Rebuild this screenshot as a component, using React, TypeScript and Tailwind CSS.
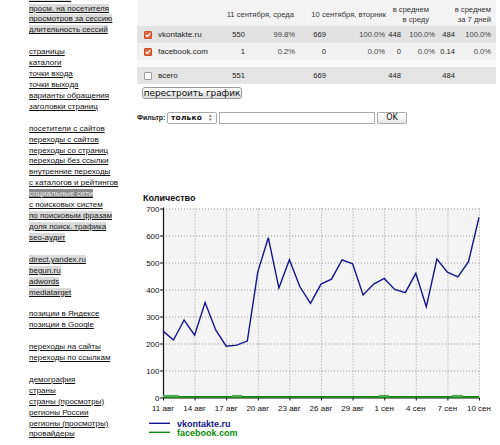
import React from "react";

type NavItem = { t: string; hl?: "light" | "dark" } | null;

const nav: NavItem[] = [
  { t: "посетители", hl: "light" },
  { t: "просм. на посетителя", hl: "light" },
  { t: "просмотров за сессию", hl: "light" },
  { t: "длительность сессий", hl: "light" },
  null,
  { t: "страницы" },
  { t: "каталоги" },
  { t: "точки входа" },
  { t: "точки выхода" },
  { t: "варианты обращения" },
  { t: "заголовки страниц" },
  null,
  { t: "посетители с сайтов" },
  { t: "переходы с сайтов" },
  { t: "переходы со страниц" },
  { t: "переходы без ссылки" },
  { t: "внутренние переходы" },
  { t: "с каталогов и рейтингов" },
  { t: "социальные сети", hl: "dark" },
  { t: "с поисковых систем" },
  { t: "по поисковым фразам", hl: "light" },
  { t: "доля поиск. трафика", hl: "light" },
  { t: "seo-аудит", hl: "light" },
  null,
  { t: "direct.yandex.ru", hl: "light" },
  { t: "begun.ru", hl: "light" },
  { t: "adwords", hl: "light" },
  { t: "mediatarget", hl: "light" },
  null,
  { t: "позиции в Яндексе" },
  { t: "позиции в Google" },
  null,
  { t: "переходы на сайты" },
  { t: "переходы по ссылкам" },
  null,
  { t: "демография" },
  { t: "страны" },
  { t: "страны (просмотры)" },
  { t: "регионы России" },
  { t: "регионы (просмотры)" },
  { t: "провайдеры" },
];

function Nav() {
  return (
    <div className="w-[136px] shrink-0 pl-[29px] mt-[-7.4px] text-[8px] leading-[10.93px]">
      {nav.map((it, i) =>
        it === null ? (
          <div key={i} className="h-[10.93px]" />
        ) : (
          <div key={i} className="h-[10.93px] whitespace-nowrap">
            <span
              className={
                "underline underline-offset-[1px] decoration-[#111] " +
                (it.hl === "dark"
                  ? "bg-[#8a8a8a] text-[#eeeeee]"
                  : it.hl === "light"
                  ? "bg-[#dadada] text-[#222]"
                  : "text-[#111]")
              }
            >
              {it.t}
            </span>
          </div>
        )
      )}
    </div>
  );
}

function Box({ checked }: { checked: boolean }) {
  return checked ? (
    <span className="w-[8px] h-[8px] rounded-[1px] bg-[#e2643d] border border-[#c8502d] flex items-center justify-center">
      <svg width="6" height="6" viewBox="0 0 6 6">
        <path d="M0.8 3 L2.4 4.6 L5.2 1.2" stroke="#fff" strokeWidth="1.3" fill="none" />
      </svg>
    </span>
  ) : (
    <span className="w-[8px] h-[8px] rounded-[1px] bg-white border border-[#9a9a9a]" />
  );
}

type RowProps = {
  bg: string;
  checked: boolean;
  name: string;
  v: string[];
};

function Row({ bg, checked, name, v }: RowProps) {
  return (
    <div className={"flex h-[17px] items-center text-[7.6px] text-[#222] " + bg}>
      <div className="w-[19px] pl-[7px] flex">
        <Box checked={checked} />
      </div>
      <div className="w-[50px] pl-[2px] text-[8px]">{name}</div>
      <div className="w-[39px] text-right">{v[0]}</div>
      <div className="w-[50px] text-right text-[#444]">{v[1]}</div>
      <div className="w-[31px] text-right">{v[2]}</div>
      <div className="w-[59px] text-right text-[#444]">{v[3]}</div>
      <div className="w-[16px] text-right">{v[4]}</div>
      <div className="w-[34px] text-right text-[#444]">{v[5]}</div>
      <div className="w-[20px] text-right">{v[6]}</div>
      <div className="w-[36px] text-right text-[#444]">{v[7]}</div>
    </div>
  );
}

function Table() {
  return (
    <div className="ml-[1px] w-[359px] bg-[#f3f3f3] flex flex-col">
      <div className="flex h-[26px] items-center pt-[4px] text-[7.6px] leading-[10px] text-[#333]">
        <div className="w-[69px]" />
        <div className="w-[89px] text-right pr-[1px]">11 сентября, среда</div>
        <div className="w-[91px] text-right">10 сентября, вторник</div>
        <div className="w-[49px] text-right pr-[6px]">
          в среднем
          <br />в среду
        </div>
        <div className="w-[56px] text-right">
          в среднем
          <br />
          за 7 дней
        </div>
      </div>
      <Row
        bg="bg-[#e2e2e2]"
        checked
        name="vkontakte.ru"
        v={["550", "99.8%", "669", "100.0%", "448", "100.0%", "484", "100.0%"]}
      />
      <Row
        bg="bg-[#f1f1f1]"
        checked
        name="facebook.com"
        v={["1", "0.2%", "0", "0.0%", "0", "0.0%", "0.14", "0.0%"]}
      />
      <div className="h-[7px] bg-[#fafafa]" />
      <Row bg="bg-[#e4e4e4]" checked={false} name="всего" v={["551", "", "669", "", "448", "", "484", ""]} />
    </div>
  );
}

function Filter() {
  return (
    <div className="mt-[13px] flex items-center h-[12px]">
      <span className="ml-[1px] w-[30px] text-[7px] font-bold text-[#222]">Фильтр:</span>
      <div className="w-[50px] h-[12px] border border-[#aaa] rounded-[2px] bg-white flex items-center pl-[3px] text-[#111]">
        <span className="w-[36px] overflow-hidden whitespace-nowrap font-['DejaVu_Sans',sans-serif] text-[7.5px] font-bold tracking-[0.2px]">
          только
        </span>
        <span className="ml-[1px] flex flex-col text-[#666] leading-[4px] text-[4.5px]">
          <span>▲</span>
          <span>▼</span>
        </span>
      </div>
      <div className="ml-[2px] w-[156px] h-[12px] border border-[#aaa] bg-white" />
      <div className="ml-[2px] w-[30px] h-[12px] border border-[#aaa] rounded-[2px] bg-gradient-to-b from-[#ffffff] to-[#e6e6e6] flex items-center justify-center text-[8px] text-[#111] font-['DejaVu_Sans',sans-serif]">
        OK
      </div>
    </div>
  );
}

const vk = [
  246, 213, 287, 231, 352, 250, 190, 194, 209, 465, 592, 405, 510, 410, 349, 420, 438, 510, 495, 380, 420,
  441, 400, 388, 460, 336, 513, 464, 447, 503, 667,
];

const X0 = 163;
const DX = 10.533;
const Y0 = 397.5;
const KY = 0.27;
const xs = (i: number) => X0 + i * DX;
const ys = (v: number) => Y0 - v * KY;

const xLabels = ["11 авг", "14 авг", "17 авг", "20 авг", "23 авг", "26 авг", "29 авг", "1 сен", "4 сен", "7 сен", "10 сен"];

function Chart() {
  const pts = vk.map((v, i) => `${xs(i).toFixed(1)},${ys(v).toFixed(1)}`).join(" ");
  const xEnd = xs(30);
  const yTop = ys(700);
  return (
    <svg
      className="mt-[61px] block"
      width="364"
      height="260"
      viewBox="136 185 364 260"
      fontFamily="'Liberation Sans', Arial, sans-serif"
    >
      <text x="143" y="200.5" fontSize="9" fontWeight="bold" fill="#111">
        Количество
      </text>
      <rect x={X0} y={yTop} width={xEnd - X0} height={Y0 - yTop} fill="#f4f4f4" />
      {[100, 200, 300, 400, 500, 600, 700].map((v) => (
        <line
          key={v}
          x1={X0}
          x2={xEnd}
          y1={ys(v) + 0.5}
          y2={ys(v) + 0.5}
          stroke="#9a9a9a"
          strokeWidth="1"
          strokeDasharray="1 2"
        />
      ))}
      {xLabels.map((_, k) => (
        <line
          key={k}
          x1={xs(k * 3) + 0.5}
          x2={xs(k * 3) + 0.5}
          y1={yTop}
          y2={Y0}
          stroke="#9a9a9a"
          strokeWidth="1"
          strokeDasharray="1 2"
        />
      ))}
      {[0, 100, 200, 300, 400, 500, 600, 700].map((v) => (
        <g key={v}>
          <line x1={X0 - 3} x2={X0} y1={ys(v) + 0.5} y2={ys(v) + 0.5} stroke="#111" strokeWidth="1" />
          <text x="159.5" y={ys(v) + 3} fontSize="8" textAnchor="end" fill="#111">
            {v}
          </text>
        </g>
      ))}
      {xLabels.map((l, k) => (
        <g key={l}>
          <line x1={xs(k * 3) + 0.5} x2={xs(k * 3) + 0.5} y1={Y0} y2={Y0 + 3} stroke="#111" strokeWidth="1" />
          <text x={xs(k * 3)} y="410.5" fontSize="8" textAnchor="middle" fill="#111">
            {l}
          </text>
        </g>
      ))}
      <line x1={X0 + 0.5} x2={X0 + 0.5} y1={yTop - 1} y2={Y0 + 1} stroke="#111" strokeWidth="1.2" />
      <line x1={X0} x2={xEnd} y1={Y0 + 0.5} y2={Y0 + 0.5} stroke="#111" strokeWidth="1.2" />
      <line x1={X0} x2={xEnd} y1={Y0 - 0.6} y2={Y0 - 0.6} stroke="#0a8a0a" strokeWidth="1.6" />
      {[
        [163, 179],
        [232, 242],
        [379, 389],
        [452, 463],
      ].map(([a, b]) => (
        <rect key={a} x={a} y={Y0 - 2.6} width={b - a} height="2" fill="#4fae4f" />
      ))}
      <polyline points={pts} fill="none" stroke="#14148e" strokeWidth="1.4" strokeLinejoin="miter" />
      <line x1="149" x2="170" y1="423.3" y2="423.3" stroke="#14148e" strokeWidth="1.4" />
      <text x="177" y="426.5" fontSize="9" fontWeight="bold" fill="#14148e">
        vkontakte.ru
      </text>
      <line x1="149" x2="170" y1="432.3" y2="432.3" stroke="#0a8a0a" strokeWidth="1.4" />
      <text x="177" y="435.5" fontSize="9" fontWeight="bold" fill="#0a8a0a">
        facebook.com
      </text>
    </svg>
  );
}

export default function App() {
  return (
    <div className="w-[500px] h-[445px] overflow-hidden bg-white flex font-['Liberation_Sans',Arial,sans-serif] text-[#222]">
      <Nav />
      <div className="w-[364px] shrink-0 flex flex-col">
        <Table />
        <button className="mt-[3px] ml-[6px] w-[100px] h-[12px] border border-[#9c9c9c] rounded-[3px] bg-gradient-to-b from-[#ffffff] to-[#dcdcdc] flex items-center justify-center text-[9px] text-[#111] font-['DejaVu_Sans',sans-serif] tracking-[-0.1px] leading-none">
          перестроить график
        </button>
        <Filter />
        <Chart />
      </div>
    </div>
  );
}
